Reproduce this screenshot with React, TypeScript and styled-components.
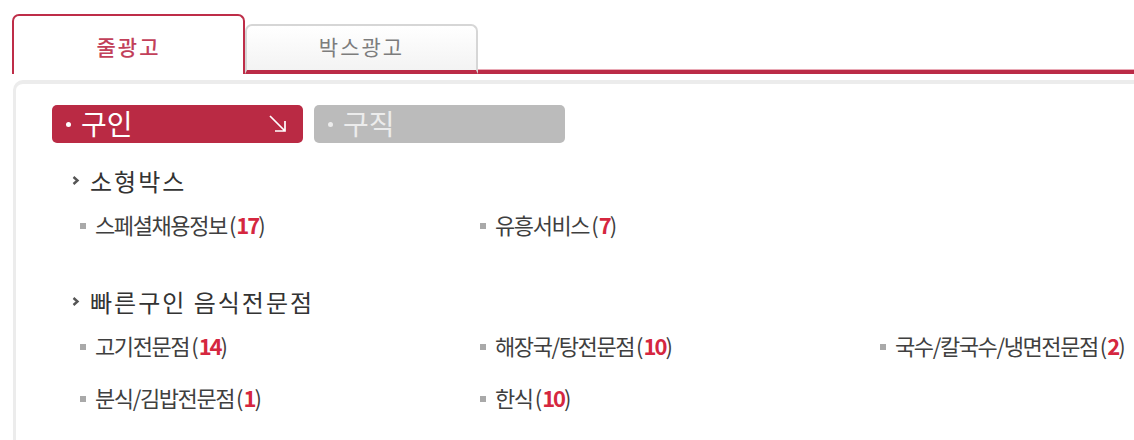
import React from 'react';
import styled, { createGlobalStyle } from 'styled-components';

const GlobalStyle = createGlobalStyle`
  body {
    margin: 0;
    background: #ffffff;
    font-family: "Noto Sans CJK KR", "Noto Sans", sans-serif;
    overflow: hidden;
  }
`;

const Page = styled.div`
  width: 1134px;
  height: 440px;
  overflow: hidden;
`;

const TabBar = styled.div`
  display: flex;
  align-items: flex-end;
  height: 74px;
  padding-left: 12px;
`;

const Tab = styled.div<{ $active?: boolean }>`
  box-sizing: border-box;
  width: 233px;
  display: flex;
  justify-content: center;
  font-size: 21px;
  letter-spacing: 2px;
  line-height: 30px;
  border-radius: 7px 7px 0 0;
  ${(p) =>
    p.$active
      ? `
    height: 60px;
    padding-top: 15px;
    border: 2px solid #be2d48;
    border-bottom: none;
    background: #fff;
    color: #c2405a;
    font-weight: 500;
  `
      : `
    height: 50px;
    padding-top: 5px;
    border: 2px solid #d6d6d6;
    border-bottom: 4px solid #bb2b47;
    background: linear-gradient(#ffffff, #f3f3f3);
    color: #7d7d7d;
  `}
`;

const TabLine = styled.div`
  flex: 1;
  height: 4px;
  background: #bb2b47;
  box-shadow: 0 -1px 0 #e9a9b5;
`;

const Panel = styled.div`
  margin: 6px -20px 0 13px;
  padding: 21px 0 40px 36px;
  border: 4px solid #ececec;
  border-right: none;
  border-bottom: none;
  border-left-width: 3px;
  border-radius: 10px 0 0 0;
`;

const ToggleRow = styled.div`
  display: flex;
  gap: 11px;
`;

const Toggle = styled.div<{ $on?: boolean }>`
  box-sizing: border-box;
  width: 251px;
  height: 38px;
  border-radius: 5px;
  display: flex;
  align-items: center;
  padding: 0 15px 0 14px;
  font-size: 28px;
  line-height: 38px;
  background: ${(p) => (p.$on ? '#ba2a44' : '#bbbbbb')};
  color: ${(p) => (p.$on ? '#ffffff' : '#ececec')};
`;

const Dot = styled.span`
  width: 5px;
  height: 5px;
  border-radius: 50%;
  background: currentColor;
  margin-right: 10px;
  flex-shrink: 0;
`;

const ToggleLabel = styled.span`
  flex: 1;
  margin-top: -2px;
`;

const Section = styled.div<{ $first?: boolean }>`
  margin-top: ${(p) => (p.$first ? '22px' : '47px')};
`;

const Heading = styled.div`
  display: flex;
  align-items: center;
  margin-left: 20px;
  height: 30px;
  font-size: 24px;
  letter-spacing: 2px;
  color: #333;
  gap: 10px;
`;

const ItemGrid = styled.div`
  margin: 14px 0 0 28px;
  display: grid;
  grid-template-columns: repeat(3, 400px);
  row-gap: 22px;
`;

const Item = styled.div`
  display: flex;
  align-items: center;
  height: 30px;
  font-size: 22px;
  letter-spacing: -1.4px;
  color: #3f3f3f;
  white-space: nowrap;
`;

const Square = styled.span`
  width: 6px;
  height: 6px;
  background: #a9a9a9;
  margin: 3px 9px 0 0;
  flex-shrink: 0;
`;

const Count = styled.b`
  color: #d5273f;
  font-weight: 700;
  letter-spacing: -2px;
`;

const Paren = styled.span`
  margin-left: 2px;
  letter-spacing: 0;
`;

const Chevron = () => (
  <svg width="8" height="9" viewBox="0 0 8 9">
    <polyline points="1.5,1 5.5,4.5 1.5,8" fill="none" stroke="#555" strokeWidth="2.4" />
  </svg>
);

const ArrowDownRight = () => (
  <svg width="20" height="20" viewBox="0 0 20 20">
    <path d="M2 2 L17 17 M17 7 V17 H7" fill="none" stroke="#fff" strokeWidth="1.7" />
  </svg>
);

type Entry = { name: string; count: number };

const sections: { title: string; items: Entry[] }[] = [
  {
    title: '소형박스',
    items: [
      { name: '스페셜채용정보', count: 17 },
      { name: '유흥서비스', count: 7 },
    ],
  },
  {
    title: '빠른구인 음식전문점',
    items: [
      { name: '고기전문점', count: 14 },
      { name: '해장국/탕전문점', count: 10 },
      { name: '국수/칼국수/냉면전문점', count: 2 },
      { name: '분식/김밥전문점', count: 1 },
      { name: '한식', count: 10 },
    ],
  },
];

const App: React.FC = () => {
  return (
    <Page>
      <GlobalStyle />
      <TabBar>
        <Tab $active>줄광고</Tab>
        <Tab>박스광고</Tab>
        <TabLine />
      </TabBar>
      <Panel>
        <ToggleRow>
          <Toggle $on>
            <Dot />
            <ToggleLabel>구인</ToggleLabel>
            <ArrowDownRight />
          </Toggle>
          <Toggle>
            <Dot />
            <ToggleLabel>구직</ToggleLabel>
          </Toggle>
        </ToggleRow>
        {sections.map((s, i) => (
          <Section key={s.title} $first={i === 0}>
            <Heading>
              <Chevron />
              {s.title}
            </Heading>
            <ItemGrid>
              {s.items.map((it) => (
                <Item key={it.name}>
                  <Square />
                  {it.name}
                  <Paren>(</Paren>
                  <Count>{it.count}</Count>
                  <span>)</span>
                </Item>
              ))}
            </ItemGrid>
          </Section>
        ))}
      </Panel>
    </Page>
  );
};

export default App;
